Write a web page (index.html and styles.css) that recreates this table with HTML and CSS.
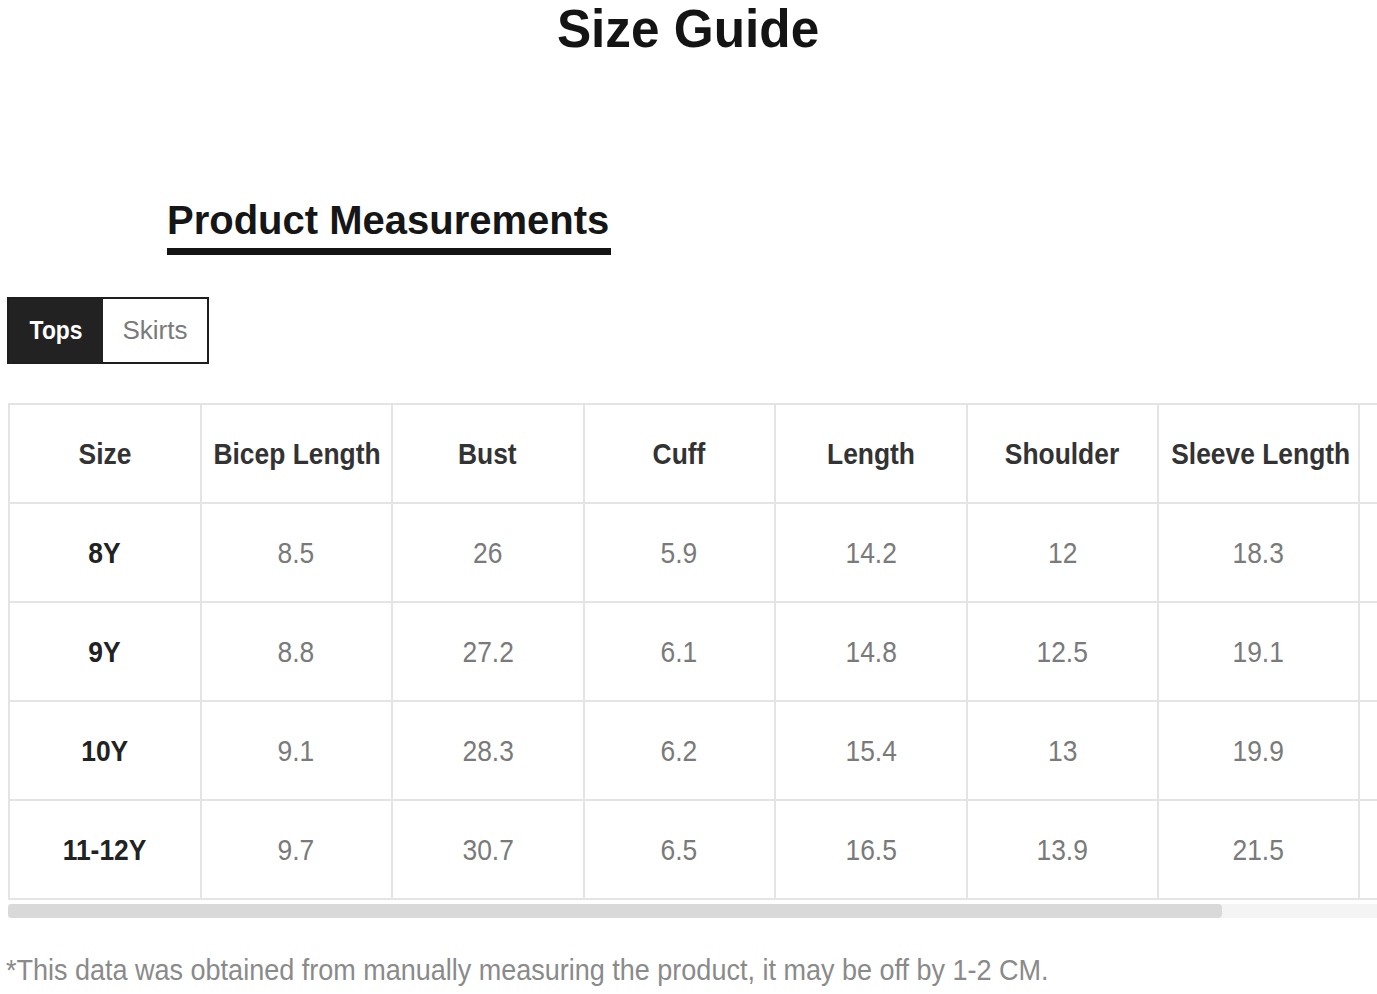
FILE: index.html
```html
<!DOCTYPE html>
<html lang="en">
<head>
<meta charset="utf-8">
<title>Size Guide</title>
<link rel="stylesheet" href="styles.css">
</head>
<body>
  <h1 class="title"><span class="title-text">Size Guide</span></h1>

  <div class="section-head">
    <h2 class="section-title">Product Measurements</h2>
  </div>

  <div class="tabs">
    <div class="tab active"><span class="cond">Tops</span></div>
    <div class="tab">Skirts</div>
  </div>

  <div class="table-wrap">
    <table class="sizes">
      <colgroup>
        <col class="c"><col class="c"><col class="c"><col class="c"><col class="c"><col class="c"><col class="c-wide"><col class="c-last">
      </colgroup>
      <thead>
        <tr>
          <th><span class="cond">Size</span></th>
          <th><span class="cond">Bicep Length</span></th>
          <th><span class="cond">Bust</span></th>
          <th><span class="cond">Cuff</span></th>
          <th><span class="cond">Length</span></th>
          <th><span class="cond">Shoulder</span></th>
          <th><span class="cond">Sleeve Length</span></th>
          <th></th>
        </tr>
      </thead>
      <tbody>
        <tr>
          <th><span class="cond">8Y</span></th>
          <td><span class="cond">8.5</span></td><td><span class="cond">26</span></td><td><span class="cond">5.9</span></td><td><span class="cond">14.2</span></td><td><span class="cond">12</span></td><td><span class="cond">18.3</span></td><td></td>
        </tr>
        <tr>
          <th><span class="cond">9Y</span></th>
          <td><span class="cond">8.8</span></td><td><span class="cond">27.2</span></td><td><span class="cond">6.1</span></td><td><span class="cond">14.8</span></td><td><span class="cond">12.5</span></td><td><span class="cond">19.1</span></td><td></td>
        </tr>
        <tr>
          <th><span class="cond">10Y</span></th>
          <td><span class="cond">9.1</span></td><td><span class="cond">28.3</span></td><td><span class="cond">6.2</span></td><td><span class="cond">15.4</span></td><td><span class="cond">13</span></td><td><span class="cond">19.9</span></td><td></td>
        </tr>
        <tr>
          <th><span class="cond">11-12Y</span></th>
          <td><span class="cond">9.7</span></td><td><span class="cond">30.7</span></td><td><span class="cond">6.5</span></td><td><span class="cond">16.5</span></td><td><span class="cond">13.9</span></td><td><span class="cond">21.5</span></td><td></td>
        </tr>
      </tbody>
    </table>
  </div>
  <div class="scrollbar"><div class="thumb"></div></div>

  <p class="note"><span class="cond-left">*This data was obtained from manually measuring the product, it may be off by 1-2 CM.</span></p>
</body>
</html>
```
FILE: styles.css
```css
html, body {
  margin: 0;
  padding: 0;
  background: #ffffff;
}

body {
  font-family: "Liberation Sans", Arial, sans-serif;
  color: #222;
}

.cond {
  display: inline-block;
  transform: scaleX(0.88);
  transform-origin: center;
  white-space: nowrap;
}

.cond-left {
  display: inline-block;
  transform: scaleX(0.9);
  transform-origin: left center;
  white-space: nowrap;
}

.title {
  margin: 0;
  text-align: center;
  font-size: 54px;
  line-height: 56px;
  font-weight: bold;
  color: #141414;
}

.title-text {
  display: inline-block;
  transform: scaleX(0.95);
  transform-origin: center;
  white-space: nowrap;
}

.section-head {
  padding: 141px 0 0 167px;
}

.section-title {
  display: inline-block;
  margin: 0;
  font-size: 40px;
  line-height: 46px;
  font-weight: bold;
  color: #161616;
  padding: 0 2px 5px 0;
  border-bottom: 7px solid #141414;
}

.tabs {
  display: flex;
  margin: 42px 0 0 7px;
  width: 198px;
  height: 63px;
  border: 2px solid #1e1e1e;
}

.tab {
  display: flex;
  align-items: center;
  justify-content: center;
  font-size: 26px;
  color: #7a7a7a;
  flex: 1 1 auto;
}

.tab.active {
  flex: 0 0 94px;
  background: #222222;
  color: #ffffff;
  font-weight: bold;
}

.table-wrap {
  margin: 39px 0 0 8px;
  width: 1369px;
  overflow: hidden;
}

.sizes {
  border-collapse: collapse;
  table-layout: fixed;
  width: 1543px;
}

.sizes col.c { width: 191.5px; }
.sizes col.c-wide { width: 201px; }
.sizes col.c-last { width: 193px; }

.sizes th,
.sizes td {
  height: 97px;
  padding: 0;
  border: 2px solid #e4e4e4;
  text-align: center;
  vertical-align: middle;
  font-size: 30px;
}

.sizes thead th {
  font-weight: bold;
  color: #333333;
}

.sizes tbody th {
  font-weight: bold;
  color: #222222;
}

.sizes td {
  color: #7a7a7a;
  font-weight: normal;
}

.scrollbar {
  margin: 4px 0 0 8px;
  width: 1369px;
  height: 14px;
  background: #f4f4f4;
}

.scrollbar .thumb {
  width: 1214px;
  height: 14px;
  border-radius: 4px;
  background: #d9d9d9;
}

.note {
  margin: 35px 0 0 6px;
  font-size: 30px;
  line-height: 34px;
  color: #8a8a8a;
}
```
